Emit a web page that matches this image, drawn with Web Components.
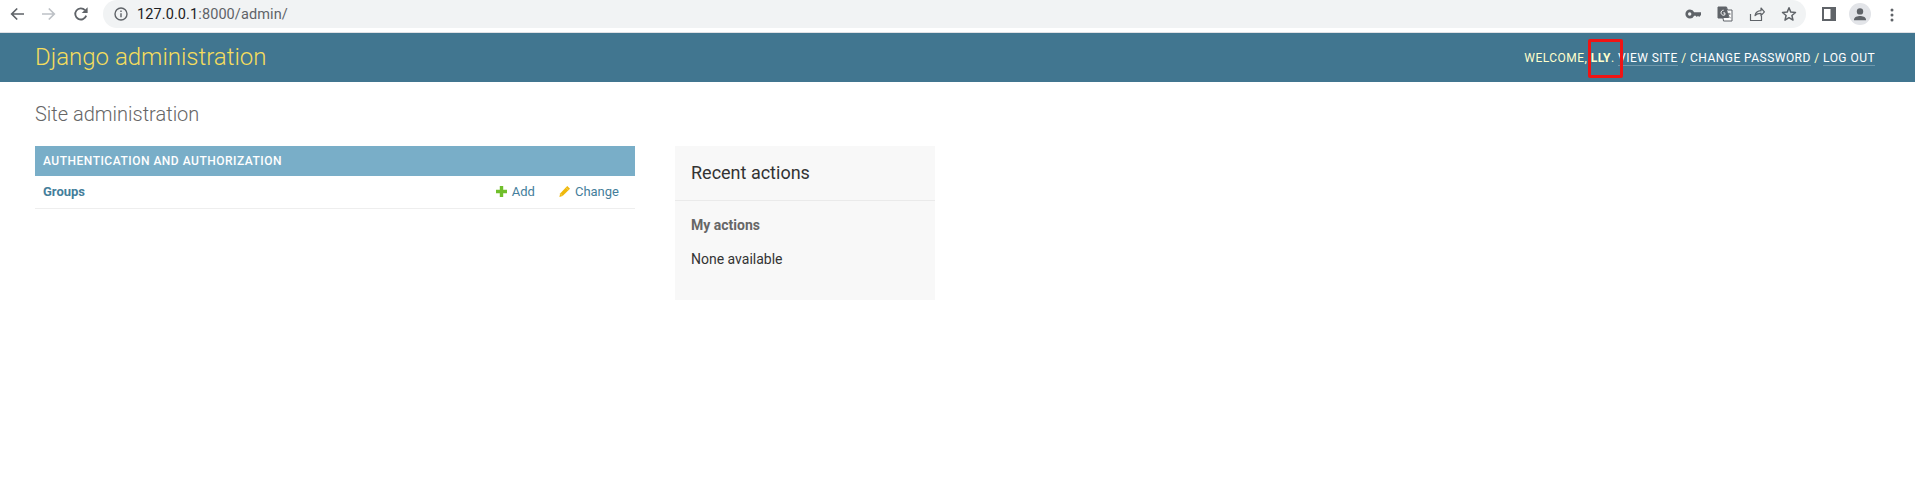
<!DOCTYPE html>
<html>
<head>
<meta charset="utf-8">
<title>Site administration</title>
<style>
  html, body { margin: 0; padding: 0; background: #fff; }
  body { font-family: Roboto, "Liberation Sans", sans-serif; width: 1915px; height: 478px; overflow: hidden; }
</style>
</head>
<body>
<browser-bar url-host="127.0.0.1" url-rest=":8000/admin/"></browser-bar>
<admin-header>
  <span slot="brand">Django administration</span>
</admin-header>
<admin-content>
  <div slot="main">
    <app-module caption="Authentication and Authorization">
      <model-row name="Groups"></model-row>
    </app-module>
  </div>
  <recent-actions slot="side"></recent-actions>
</admin-content>

<script>
customElements.define("browser-bar", class extends HTMLElement {
  constructor() {
    super();
    const root = this.attachShadow({ mode: "open" });
    root.innerHTML = `
    <style>
      :host { display: flex; align-items: flex-start; height: 32px; border-bottom: 1px solid #dfe1e5; background: #fff; box-sizing: content-box; }
      .nav { display: flex; align-items: center; height: 28px; width: 103px; flex: none; }
      .nav svg { display: block; flex: none; }
      .omni { flex: none; width: 1703px; height: 28px; background: #f1f3f4; border-radius: 14px; display: flex; align-items: center; box-sizing: border-box; padding: 0 9px 0 11px; }
      .url { margin-left: 9px; font-size: 14.5px; color: #5f6368; white-space: nowrap; letter-spacing: .1px; }
      .url b { font-weight: 400; color: #202124; }
      .right { margin-left: auto; display: flex; align-items: center; gap: 14px; }
      svg { display: block; }
    </style>
    <div class="nav">
      <svg style="margin-left:9px" width="16" height="16" viewBox="0 0 16 16"><path d="M15 8H3M8.2 2.5 2.7 8l5.5 5.5" fill="none" stroke="#5f6368" stroke-width="1.7"/></svg>
      <svg style="margin-left:16px" width="16" height="16" viewBox="0 0 16 16"><path d="M1 8h12M7.8 2.5 13.3 8l-5.5 5.5" fill="none" stroke="#bdc1c6" stroke-width="1.7"/></svg>
      <svg style="margin-left:16px" width="16" height="16" viewBox="0 0 16 16"><path d="M13.2 9.6A5.6 5.6 0 1 1 12 4.1" fill="none" stroke="#5f6368" stroke-width="1.8"/><path d="M14.6 1.2v5.9H8.7z" fill="#5f6368"/></svg>
    </div>
    <div class="omni">
      <svg width="14" height="14" viewBox="0 0 14 14"><circle cx="7" cy="7" r="6" fill="none" stroke="#5f6368" stroke-width="1.4"/><path d="M6.3 6.2h1.4v4.1H6.3zM6.3 3.6h1.4V5H6.3z" fill="#5f6368"/></svg>
      <span class="url"><b>${this.getAttribute("url-host")}</b>${this.getAttribute("url-rest")}</span>
      <div class="right">
        <svg width="16" height="16" viewBox="0 0 16 16"><path d="M5 3.4a4.6 4.6 0 1 0 0 9.2 4.6 4.6 0 0 0 4.2-2.8h1.5l1.1 1.2 1.2-1.2 1.1 1.2 1.9-2V6.2H9.2A4.6 4.6 0 0 0 5 3.4Zm-.3 2.9a1.7 1.7 0 1 1 0 3.4 1.7 1.7 0 0 1 0-3.4Z" fill="#5f6368" fill-rule="evenodd"/></svg>
        <svg style="margin-left:2px" width="16" height="16" viewBox="0 0 16 16"><path d="M1 1h8.5l1 3H15v11H6.5L6 12H1z" fill="#fff" stroke="#5f6368" stroke-width="1"/><path d="M1 1h8.5L12 12H1z" fill="#5f6368"/><path d="M6.6 4.2a2.5 2.5 0 1 0 1.3 4.6V6.9H6.3" fill="none" stroke="#fff" stroke-width="1"/><path d="M10.5 8h3.2M12 6.8c0 2.2-.8 4-2 5M10.6 8.8c.5 1.2 1.6 2.3 3 3" fill="none" stroke="#5f6368" stroke-width=".9"/></svg>
        <svg style="margin-left:2px" width="16" height="16" viewBox="0 0 16 16"><path d="M1.5 8v6.5h11V10M6 9.5c.6-3 2.7-4.7 6-4.8V2l3.4 3.9L12 9.7V7.3c-2.5 0-4.5.6-6 2.2Z" fill="none" stroke="#5f6368" stroke-width="1.2" stroke-linejoin="round"/></svg>
        <svg style="margin-left:2px" width="16" height="16" viewBox="0 0 16 16"><path d="m8 1.8 1.8 4.3 4.7.4-3.6 3 1.1 4.6L8 11.7l-4 2.4 1.1-4.6-3.6-3 4.7-.4z" fill="none" stroke="#5f6368" stroke-width="1.5" stroke-linejoin="round"/></svg>
      </div>
    </div>
    <svg style="margin:7px 0 0 16px;flex:none" width="14" height="14" viewBox="0 0 14 14"><path d="M0 0h14v14H0z" fill="#5f6368"/><path d="M2 2h6.5v10H2z" fill="#fff"/></svg>
    <svg style="margin:3px 0 0 13px;flex:none" width="22" height="22" viewBox="0 0 22 22"><circle cx="11" cy="11" r="11" fill="#e2e4e8"/><circle cx="11" cy="8.4" r="3.2" fill="#5f6368"/><path d="M5 16.6c0-2.6 3.6-3.6 6-3.6s6 1 6 3.6v.6H5z" fill="#5f6368"/></svg>
    <svg style="margin:8px 0 0 19px;flex:none" width="4" height="14" viewBox="0 0 4 14"><circle cx="2" cy="2" r="1.5" fill="#5f6368"/><circle cx="2" cy="7" r="1.5" fill="#5f6368"/><circle cx="2" cy="12" r="1.5" fill="#5f6368"/></svg>
    `;
  }
});

customElements.define("admin-header", class extends HTMLElement {
  constructor() {
    super();
    const root = this.attachShadow({ mode: "open" });
    root.innerHTML = `
    <style>
      :host { display: flex; align-items: center; justify-content: space-between; position: relative; height: 49px; padding: 0 40px 0 35px; box-sizing: border-box; background: #417690; color: #ffc; }
      .brand { font-size: 24px; font-weight: 300; color: #f5dd5d; line-height: 49px; }
      .tools { font-size: 12px; letter-spacing: .46px; text-transform: uppercase; white-space: nowrap; }
      .tools a { color: #fff; text-decoration: none; border-bottom: 1px solid rgba(255,255,255,.25); }
      .tools strong { font-weight: 700; }
      .mark { position: absolute; left: 1588px; top: 6px; width: 35px; height: 39px; box-sizing: border-box; border: 3px solid #f01414; border-radius: 2px; }
    </style>
    <div class="brand"><slot name="brand"></slot></div>
    <div class="tools">Welcome, <strong>lly</strong>. <a>View site</a> / <a>Change password</a> / <a>Log out</a></div>
    <div class="mark"></div>
    `;
  }
});

customElements.define("admin-content", class extends HTMLElement {
  constructor() {
    super();
    const root = this.attachShadow({ mode: "open" });
    root.innerHTML = `
    <style>
      :host { display: block; padding: 20px 35px 0; }
      h1 { margin: 0 0 20px; font-size: 20px; font-weight: 300; line-height: 24px; color: #666; }
      .cols { display: flex; gap: 40px; align-items: flex-start; }
      .main { width: 600px; flex: none; }
    </style>
    <h1>Site administration</h1>
    <div class="cols">
      <div class="main"><slot name="main"></slot></div>
      <slot name="side"></slot>
    </div>
    `;
  }
});

customElements.define("app-module", class extends HTMLElement {
  constructor() {
    super();
    const root = this.attachShadow({ mode: "open" });
    root.innerHTML = `
    <style>
      :host { display: block; }
      .caption { height: 30px; line-height: 30px; padding: 0 8px; background: #79aec8; color: #fff; font-size: 12px; font-weight: 500; letter-spacing: .5px; text-transform: uppercase; }
    </style>
    <div class="caption">${this.getAttribute("caption")}</div>
    <slot></slot>
    `;
  }
});

customElements.define("model-row", class extends HTMLElement {
  constructor() {
    super();
    const root = this.attachShadow({ mode: "open" });
    root.innerHTML = `
    <style>
      :host { display: flex; align-items: center; height: 33px; padding: 0 16px 1px 8px; box-sizing: border-box; border-bottom: 1px solid #eee; font-size: 13px; color: #447e9b; }
      .name { font-weight: 700; margin-right: auto; }
      .act { display: flex; align-items: center; gap: 5px; }
      .act + .act { margin-left: 24px; }
      svg { display: block; }
    </style>
    <span class="name">${this.getAttribute("name")}</span>
    <span class="act">
      <svg width="11" height="11" viewBox="0 0 11 11"><path d="M3.8 0h3.4v3.8H11v3.4H7.2V11H3.8V7.2H0V3.8h3.8z" fill="#70bf2b"/></svg>
      Add
    </span>
    <span class="act">
      <svg width="11" height="11" viewBox="0 0 11 11"><path d="M8.3 0 11 2.7 3.6 10.1.4 11l.7-3.4z" fill="#efb80b"/><path d="M1.2 7.5 3.6 10M7 1.6l2.4 2.5" stroke="#f9e29a" stroke-width=".6" fill="none"/></svg>
      Change
    </span>
    `;
  }
});

customElements.define("recent-actions", class extends HTMLElement {
  constructor() {
    super();
    const root = this.attachShadow({ mode: "open" });
    root.innerHTML = `
    <style>
      :host { display: block; width: 260px; height: 154px; background: #f8f8f8; box-sizing: border-box; }
      h2 { margin: 0; padding: 0 16px; height: 55px; line-height: 53px; box-sizing: border-box; border-bottom: 1px solid #eaeaea; font-size: 18px; font-weight: 400; color: #333; }
      h3 { margin: 0; padding: 16px 16px 0; font-size: 14px; line-height: 16px; font-weight: 700; color: #666; }
      p { margin: 0; padding: 18px 16px 0; font-size: 14px; line-height: 16px; color: #333; }
    </style>
    <h2>Recent actions</h2>
    <h3>My actions</h3>
    <p>None available</p>
    `;
  }
});
</script>
</body>
</html>
